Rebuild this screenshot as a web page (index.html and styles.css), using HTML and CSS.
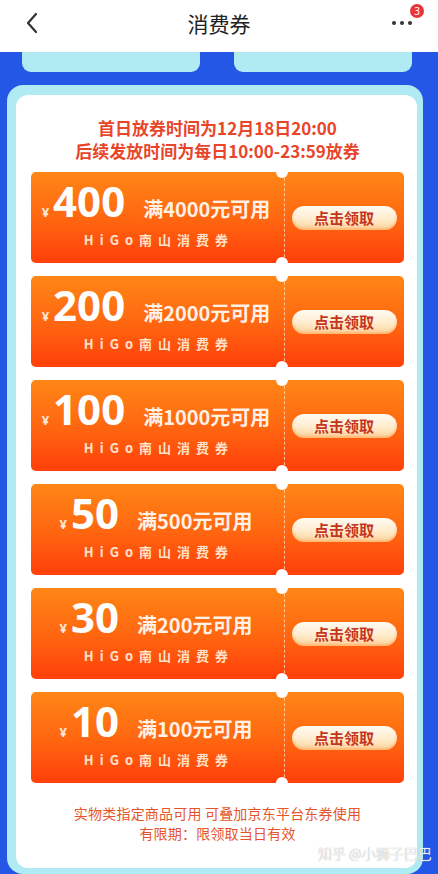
FILE: index.html
```html
<!DOCTYPE html>
<html lang="zh-CN">
<head>
  <meta charset="UTF-8">
  <meta name="viewport" content="width=device-width, initial-scale=1.0">
  <title>消费券</title>
  <link rel="stylesheet" href="styles.css">
</head>
<body>

  <!-- 顶部导航 -->
  <div class="top-bar">
    <svg class="back-icon" width="14" height="22" viewBox="0 0 14 22">
      <path d="M11 2 L3 11 L11 20" fill="none" stroke="#333" stroke-width="2.2" stroke-linecap="round" stroke-linejoin="round"/>
    </svg>
    <div class="title">消费券</div>
    <div class="more">
      <span class="dot"></span><span class="dot"></span><span class="dot"></span>
      <span class="badge">3</span>
    </div>
  </div>

  <div class="page">
    <div class="tabs">
      <div class="tab"></div>
      <div class="tab"></div>
    </div>

    <div class="panel">
      <div class="panel-inner">
        <div class="notice">
          <p>首日放券时间为12月18日20:00</p>
          <p>后续发放时间为每日10:00-23:59放券</p>
        </div>

        <div class="coupon-list">
          <div class="coupon">
            <div class="coupon-left">
              <div class="amount-row">
                <span class="yen">¥</span><span class="amount">400</span>
                <span class="limit">满4000元可用</span>
              </div>
              <div class="brand">HiGo南山消费券</div>
            </div>
            <div class="coupon-right"><button class="get-btn">点击领取</button></div>
          </div>

          <div class="coupon">
            <div class="coupon-left">
              <div class="amount-row">
                <span class="yen">¥</span><span class="amount">200</span>
                <span class="limit">满2000元可用</span>
              </div>
              <div class="brand">HiGo南山消费券</div>
            </div>
            <div class="coupon-right"><button class="get-btn">点击领取</button></div>
          </div>

          <div class="coupon">
            <div class="coupon-left">
              <div class="amount-row">
                <span class="yen">¥</span><span class="amount">100</span>
                <span class="limit">满1000元可用</span>
              </div>
              <div class="brand">HiGo南山消费券</div>
            </div>
            <div class="coupon-right"><button class="get-btn">点击领取</button></div>
          </div>

          <div class="coupon">
            <div class="coupon-left">
              <div class="amount-row">
                <span class="yen">¥</span><span class="amount">50</span>
                <span class="limit">满500元可用</span>
              </div>
              <div class="brand">HiGo南山消费券</div>
            </div>
            <div class="coupon-right"><button class="get-btn">点击领取</button></div>
          </div>

          <div class="coupon">
            <div class="coupon-left">
              <div class="amount-row">
                <span class="yen">¥</span><span class="amount">30</span>
                <span class="limit">满200元可用</span>
              </div>
              <div class="brand">HiGo南山消费券</div>
            </div>
            <div class="coupon-right"><button class="get-btn">点击领取</button></div>
          </div>

          <div class="coupon">
            <div class="coupon-left">
              <div class="amount-row">
                <span class="yen">¥</span><span class="amount">10</span>
                <span class="limit">满100元可用</span>
              </div>
              <div class="brand">HiGo南山消费券</div>
            </div>
            <div class="coupon-right"><button class="get-btn">点击领取</button></div>
          </div>
        </div>

        <div class="rules">
          <p>实物类指定商品可用 可叠加京东平台东券使用</p>
          <p>有限期：限领取当日有效</p>
        </div>
      </div>
    </div>
  </div>

  <!-- 水印 -->
  <div class="watermark">知乎 @小狮子巴巴</div>

</body>
</html>
```

FILE: styles.css
```css
/* ===== General ===== */
body {
  margin: 0;
  padding: 0;
  width: 438px;
  background-color: #2457e6;
  font-family: "Noto Sans", "Noto Sans CJK SC", sans-serif;
  position: relative;
  overflow: hidden;
}

p {
  margin: 0;
}

/* ===== Top Bar ===== */
.top-bar {
  height: 52px;
  background: #fff;
  display: flex;
  align-items: center;
  justify-content: center;
  position: relative;
}

.back-icon {
  position: absolute;
  left: 25px;
  top: 12px;
}

.title {
  font-family: "Noto Sans CJK SC", sans-serif;
  font-size: 21px;
  color: #222;
  margin-top: -6px;
}

.more {
  position: absolute;
  left: 392px;
  top: 21px;
  display: flex;
  gap: 4px;
}

.more .dot {
  width: 4px;
  height: 4px;
  border-radius: 50%;
  background: #333;
}

.badge {
  position: absolute;
  left: 18px;
  top: -17px;
  width: 14px;
  height: 14px;
  border-radius: 50%;
  background: #e8353a;
  color: #fff;
  font-size: 10px;
  line-height: 14px;
  text-align: center;
}

/* ===== Page ===== */
.tabs {
  display: flex;
  gap: 34px;
  padding: 0 26px 0 22px;
}

.tab {
  width: 178px;
  height: 20px;
  background: #b0ebf3;
  border-radius: 0 0 9px 9px;
}

.panel {
  margin: 13px 15px 0 7px;
  padding: 10px 6px 6px 9px;
  background: #b0ebf3;
  border-radius: 16px;
}

.panel-inner {
  background: #fff;
  border-radius: 12px;
  padding: 21px 13px 25px 15px;
}

.notice {
  font-family: "Noto Sans CJK SC", sans-serif;
  font-weight: 700;
  font-size: 17px;
  line-height: 23px;
  color: #e9452a;
  text-align: center;
}

/* ===== Coupons ===== */
.coupon-list {
  margin-top: 10px;
  display: flex;
  flex-direction: column;
  gap: 13px;
}

.coupon {
  height: 91px;
  display: flex;
  border-radius: 5px;
  background: linear-gradient(180deg, #ff8716 0%, #ff6410 55%, #ff3f0a 100%);
  position: relative;
}

.coupon::before,
.coupon::after {
  content: "";
  position: absolute;
  left: 245px;
  width: 12px;
  height: 12px;
  border-radius: 50%;
  background: #fff;
}

.coupon::before {
  top: -6px;
}

.coupon::after {
  bottom: -6px;
}

.coupon-left {
  width: 250px;
  display: flex;
  flex-direction: column;
  align-items: center;
  padding-top: 6px;
  box-sizing: border-box;
  color: #fff;
}

.amount-row {
  display: flex;
  align-items: baseline;
  height: 46px;
}

.yen {
  font-size: 13px;
  font-weight: 700;
  margin-right: 4px;
  color: #ffe8d6;
}

.amount {
  font-family: "Noto Sans", sans-serif;
  font-weight: 700;
  font-size: 42px;
  line-height: 46px;
}

.limit {
  font-family: "Noto Sans CJK SC", sans-serif;
  font-weight: 700;
  font-size: 20px;
  margin-left: 18px;
  color: #fff1e6;
}

.brand {
  margin-top: 7px;
  font-family: "Noto Sans CJK SC", sans-serif;
  font-weight: 700;
  font-size: 13px;
  line-height: 18px;
  letter-spacing: 6px;
  margin-right: -6px;
  color: #ffe2cc;
}

.coupon-right {
  flex: 1;
  display: flex;
  align-items: center;
  justify-content: center;
  border-left: 1px dashed rgba(255, 228, 200, 0.75);
  margin: 6px 0 6px 3px;
}

.get-btn {
  width: 105px;
  height: 24px;
  margin-left: -1px;
  border: none;
  border-radius: 12px;
  background: linear-gradient(180deg, #fffbf2 0%, #ffedd2 50%, #ffd49c 100%);
  box-shadow: inset 0 -2px 3px rgba(255, 150, 70, 0.5);
  font-family: "Noto Sans CJK SC", sans-serif;
  font-weight: 700;
  font-size: 15px;
  line-height: 24px;
  color: #c5361f;
  padding: 0;
}

/* ===== Rules ===== */
.rules {
  margin-top: 20px;
  font-family: "Noto Sans CJK SC", sans-serif;
  font-size: 14px;
  line-height: 20px;
  color: #e5552c;
  text-align: center;
  letter-spacing: 0.2px;
}

.watermark {
  position: absolute;
  left: 318px;
  top: 843px;
  font-family: "Noto Sans CJK SC", sans-serif;
  font-weight: 300;
  font-size: 14px;
  color: rgba(255, 255, 255, 0.95);
  text-shadow: 0 0 1px #b8b8b8, 0 0 1px #b8b8b8;
}
```
